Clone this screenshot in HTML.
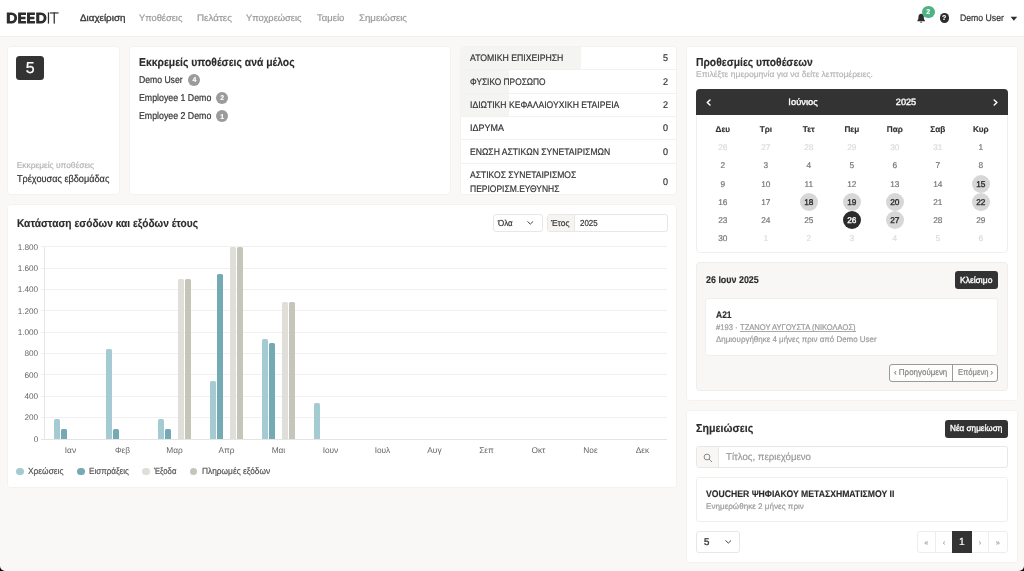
<!DOCTYPE html>
<html lang="el">
<head>
<meta charset="utf-8">
<title>DEEDIT</title>
<style>
*{box-sizing:border-box;margin:0;padding:0}
html,body{width:1024px;height:571px;overflow:hidden}
body{background:#f9f8f6;font-family:"Liberation Sans",sans-serif;color:#333;position:relative}
.abs{position:absolute}
.t{position:absolute;white-space:nowrap;line-height:1;text-rendering:geometricPrecision}
.card{position:absolute;background:#fff;border:1px solid #f3f2ef;border-radius:3.5px}
#hdr{position:absolute;left:0;top:0;width:1024px;height:36.5px;background:#fff;border-bottom:1px solid #f0efec}
.pill{position:absolute;width:12px;height:12px;border-radius:6px;background:#9b9b9b}
.sep{position:absolute;left:461px;width:215px;height:1px;background:#f2f1ee}
.pbar{position:absolute;left:461px;background:#f4f4f3}
.box{position:absolute;border:1px solid #e9e7e3;border-radius:3px;background:#fff}
.grid{position:absolute;left:40.5px;width:626.5px;height:1px;background:#ececec}
.bar{position:absolute;width:6.5px;border-radius:1.5px 1.5px 0 0}
.c1{background:#a5cbd2}.c2{background:#73aab4}.c3{background:#dfded8}.c4{background:#c6c5ba}
.dot{position:absolute;width:7.4px;height:7.4px;border-radius:50%;top:468px}
</style>
</head>
<body>
<div id="root" style="position:absolute;left:0;top:0;width:1024px;height:571px;will-change:transform">
<div id="hdr"></div>
<!-- logo -->
<svg class="abs" style="left:0;top:0" width="64" height="36" viewBox="0 0 64 36">
  <g fill="#2d2d2d" fill-rule="evenodd">
    <path d="M6.8 12.4h4.7a5.6 5.6 0 0 1 0 11.2H6.8zM9.9 15.1v5.8h1.5a2.9 2.9 0 0 0 0-5.8z"/>
    <path d="M18.1 12.4h7.9v2.6h-4.9v1.7h4.4v2.5h-4.4v1.8h5v2.6h-8z"/>
    <path d="M27 12.4h7.9v2.6h-4.9v1.7h4.4v2.5h-4.4v1.8h5v2.6h-8z"/>
    <path d="M36.2 12.4h4.7a5.6 5.6 0 0 1 0 11.2h-4.7zM39.3 15.1v5.8h1.5a2.9 2.9 0 0 0 0-5.8z"/>
    <rect x="47.85" y="12.4" width="1.25" height="11.2"/>
    <rect x="49.8" y="12.4" width="8.8" height="1.15"/>
    <rect x="53.6" y="12.4" width="1.25" height="11.2"/>
  </g>
</svg>
<!-- bell -->
<svg class="abs" style="left:915px;top:12px" width="12" height="12" viewBox="0 0 12 12">
  <path d="M6.15 1.8C4.4 1.8 3.45 3.2 3.45 4.9c0 1.9-0.3 2.7-1 3.4v0.85h7.4V8.3c-0.7-0.7-1-1.5-1-3.4 0-1.7-0.95-3.1-2.7-3.1z" fill="#2d2d2d"/>
  <path d="M5.05 9.75a1.1 1.1 0 0 0 2.2 0z" fill="#2d2d2d"/>
</svg>
<div class="abs" style="left:921.9px;top:5.5px;width:12.7px;height:12.3px;border-radius:50%;background:#4fb283"></div>
<div class="abs" style="left:939.55px;top:13.4px;width:9.2px;height:9.3px;border-radius:50%;background:#2d2d2d"></div>
<svg class="abs" style="left:1009.5px;top:16px" width="8" height="6" viewBox="0 0 8 6"><path d="M0.6 0.8h6.6L3.9 4.7z" fill="#2d2d2d"/></svg>

<!-- CARD 1 -->
<div class="card" style="left:7px;top:46px;width:113px;height:149px"></div>
<div class="abs" style="left:16px;top:55.5px;width:27.5px;height:24px;border-radius:3.5px;background:#333"></div>

<!-- CARD 2 -->
<div class="card" style="left:129px;top:46px;width:322px;height:149px"></div>
<div class="pill" style="left:188.4px;top:73.9px"></div>
<div class="pill" style="left:216.3px;top:92px"></div>
<div class="pill" style="left:216.3px;top:110.1px"></div>

<!-- CARD 3 -->
<div class="card" style="left:460px;top:46px;width:217px;height:149px"></div>
<div class="pbar" style="top:47px;width:120px;height:22px;border-radius:3px 0 0 0"></div>
<div class="pbar" style="top:70px;width:48px;height:23px"></div>
<div class="pbar" style="top:94px;width:48px;height:22px"></div>
<div class="sep" style="top:69.1px"></div>
<div class="sep" style="top:92.8px"></div>
<div class="sep" style="top:116.1px"></div>
<div class="sep" style="top:139.4px"></div>
<div class="sep" style="top:162.7px"></div>

<!-- CHART CARD -->
<div class="card" style="left:7px;top:204px;width:670px;height:284px"></div>
<div class="box" style="left:493px;top:214px;width:50px;height:18px"></div>
<svg class="abs" style="left:527.3px;top:220.8px" width="6.6" height="4.2" viewBox="0 0 8 5"><path d="M0.9 0.8L4 3.7 7.1 0.8" fill="none" stroke="#333" stroke-width="1.1" stroke-linecap="round" stroke-linejoin="round"/></svg>
<div class="box" style="left:547px;top:214px;width:121px;height:18px"></div>
<div class="abs" style="left:548px;top:215px;width:27px;height:16px;background:#f5f4f2;border-right:1px solid #e9e7e3;border-radius:2px 0 0 2px"></div>
<div class="grid" style="top:438.50px;background:#e4e4e4"></div>
<div class="grid" style="top:417.15px;background:#f0f0f0"></div>
<div class="grid" style="top:395.80px;background:#f0f0f0"></div>
<div class="grid" style="top:374.45px;background:#f0f0f0"></div>
<div class="grid" style="top:353.10px;background:#f0f0f0"></div>
<div class="grid" style="top:331.75px;background:#f0f0f0"></div>
<div class="grid" style="top:310.40px;background:#f0f0f0"></div>
<div class="grid" style="top:289.05px;background:#f0f0f0"></div>
<div class="grid" style="top:267.70px;background:#f0f0f0"></div>
<div class="grid" style="top:246.35px;background:#f0f0f0"></div>
<div class="abs" style="left:43.95px;top:246.5px;width:1px;height:193px;background:#e6e6e6"></div>
<div class="bar c1" style="left:53.75px;top:418.93px;height:20.07px"></div>
<div class="bar c2" style="left:60.65px;top:428.65px;height:10.35px"></div>
<div class="bar c1" style="left:105.75px;top:349.33px;height:89.67px"></div>
<div class="bar c2" style="left:112.65px;top:428.65px;height:10.35px"></div>
<div class="bar c1" style="left:157.75px;top:418.93px;height:20.07px"></div>
<div class="bar c2" style="left:164.65px;top:428.65px;height:10.35px"></div>
<div class="bar c3" style="left:177.85px;top:279.20px;height:159.80px"></div>
<div class="bar c4" style="left:184.75px;top:279.20px;height:159.80px"></div>
<div class="bar c1" style="left:209.75px;top:381.36px;height:57.65px"></div>
<div class="bar c2" style="left:216.65px;top:273.75px;height:165.25px"></div>
<div class="bar c3" style="left:229.85px;top:246.85px;height:192.15px"></div>
<div class="bar c4" style="left:236.75px;top:246.85px;height:192.15px"></div>
<div class="bar c1" style="left:261.75px;top:338.87px;height:100.13px"></div>
<div class="bar c2" style="left:268.65px;top:343.25px;height:95.75px"></div>
<div class="bar c3" style="left:281.85px;top:302.36px;height:136.64px"></div>
<div class="bar c4" style="left:288.75px;top:302.36px;height:136.64px"></div>
<div class="bar c1" style="left:313.75px;top:402.70px;height:36.30px"></div>
<div class="dot c1" style="left:16.2px"></div>
<div class="dot c2" style="left:77.3px"></div>
<div class="dot c3" style="left:142.4px"></div>
<div class="dot c4" style="left:189.9px"></div>
<div class="card" style="left:686px;top:46px;width:332px;height:355px"></div>
<div class="abs" style="left:695.6px;top:89.2px;width:312.4px;height:164.2px;border:1px solid #f1efec;border-radius:4px;background:#fff"></div>
<div class="abs" style="left:695.6px;top:89.2px;width:312.4px;height:25.7px;border-radius:4px 4px 0 0;background:#333"></div>
<svg class="abs" style="left:706.3px;top:98.6px" width="5.2" height="7" viewBox="0 0 6 8"><path d="M4.6 1L1.5 4l3.1 3" fill="none" stroke="#fff" stroke-width="1.7" stroke-linecap="round" stroke-linejoin="round"/></svg>
<svg class="abs" style="left:992.6px;top:98.6px" width="5.2" height="7" viewBox="0 0 6 8"><path d="M1.4 1L4.5 4 1.4 7" fill="none" stroke="#fff" stroke-width="1.7" stroke-linecap="round" stroke-linejoin="round"/></svg>
<div class="abs" style="left:971.70px;top:174.80px;width:18.2px;height:18.2px;border-radius:50%;background:#d7d7d7"></div>
<div class="abs" style="left:799.70px;top:192.90px;width:18.2px;height:18.2px;border-radius:50%;background:#d7d7d7"></div>
<div class="abs" style="left:842.70px;top:192.90px;width:18.2px;height:18.2px;border-radius:50%;background:#d7d7d7"></div>
<div class="abs" style="left:885.70px;top:192.90px;width:18.2px;height:18.2px;border-radius:50%;background:#d7d7d7"></div>
<div class="abs" style="left:971.70px;top:192.90px;width:18.2px;height:18.2px;border-radius:50%;background:#d7d7d7"></div>
<div class="abs" style="left:842.70px;top:211.00px;width:18.2px;height:18.2px;border-radius:50%;background:#2b2b2b"></div>
<div class="abs" style="left:885.70px;top:211.00px;width:18.2px;height:18.2px;border-radius:50%;background:#d7d7d7"></div>
<div class="abs" style="left:696px;top:261.5px;width:311.8px;height:129.7px;border:1px solid #efede9;border-radius:4px;background:#f8f7f5"></div>
<div class="abs" style="left:955.3px;top:271.2px;width:42.6px;height:17.7px;border-radius:3px;background:#333"></div>
<div class="abs" style="left:705.2px;top:297.8px;width:292.6px;height:57.8px;border:1px solid #f1efec;border-radius:3px;background:#fff"></div>
<div class="abs" style="left:888.9px;top:364.4px;width:109px;height:17.4px;border:1px solid #9a9a9a;border-radius:3px;background:#fdfdfc"></div>
<div class="abs" style="left:951.9px;top:364.4px;width:1px;height:17.4px;background:#9a9a9a"></div>
<div class="abs" style="left:740.4px;top:330.9px;width:115.6px;height:0.6px;background:#aaa"></div>
<div class="card" style="left:686px;top:410px;width:332px;height:153px"></div>
<div class="abs" style="left:945px;top:420.1px;width:62.7px;height:17.6px;border-radius:3px;background:#333"></div>
<div class="box" style="left:696.3px;top:446.3px;width:311.4px;height:21.4px"></div>
<div class="abs" style="left:697.3px;top:447.3px;width:21.3px;height:19.4px;background:#f8f7f5;border-right:1px solid #e9e7e3;border-radius:2px 0 0 2px"></div>
<svg class="abs" style="left:702.6px;top:452.6px" width="10" height="10" viewBox="0 0 10 10"><circle cx="4" cy="4" r="2.9" fill="none" stroke="#777" stroke-width="0.85"/><path d="M6.2 6.2L8.8 8.8" stroke="#777" stroke-width="0.85" stroke-linecap="round"/></svg>
<div class="abs" style="left:696.3px;top:477px;width:311.4px;height:45px;border:1px solid #f1efec;border-radius:3px;background:#fff"></div>
<div class="box" style="left:696.3px;top:530.7px;width:43.3px;height:22.5px"></div>
<svg class="abs" style="left:724.8px;top:540px" width="6.6" height="4.2" viewBox="0 0 8 5"><path d="M0.9 0.8L4 3.7 7.1 0.8" fill="none" stroke="#333" stroke-width="1.1" stroke-linecap="round" stroke-linejoin="round"/></svg>
<div class="box" style="left:917px;top:530.7px;width:90.7px;height:22.5px;border-color:#efedea"></div>
<div class="abs" style="left:935.2px;top:531.7px;width:1px;height:20.5px;background:#efedea"></div>
<div class="abs" style="left:988.1px;top:531.7px;width:1px;height:20.5px;background:#efedea"></div>
<div class="abs" style="left:952.2px;top:530.7px;width:19.8px;height:22.5px;background:#333"></div>
<span class="t" style="top:13px;font-size:9.4px;color:#3a3a3a;-webkit-text-stroke:0.35px;left:79.5px;transform-origin:0 50%;transform:scaleX(1.0467);">Διαχείριση</span>
<span class="t" style="top:13px;font-size:9.4px;color:#9a9a9a;-webkit-text-stroke:0.2px;left:138.9px;transform-origin:0 50%;transform:scaleX(0.9916);">Υποθέσεις</span>
<span class="t" style="top:13px;font-size:9.4px;color:#9a9a9a;-webkit-text-stroke:0.2px;left:196.8px;transform-origin:0 50%;transform:scaleX(1.0502);">Πελάτες</span>
<span class="t" style="top:13px;font-size:9.4px;color:#9a9a9a;-webkit-text-stroke:0.2px;left:246.3px;transform-origin:0 50%;transform:scaleX(0.9951);">Υποχρεώσεις</span>
<span class="t" style="top:13px;font-size:9.4px;color:#9a9a9a;-webkit-text-stroke:0.2px;left:316.9px;transform-origin:0 50%;transform:scaleX(1.0148);">Ταμείο</span>
<span class="t" style="top:13px;font-size:9.4px;color:#9a9a9a;-webkit-text-stroke:0.2px;left:358.5px;transform-origin:0 50%;transform:scaleX(1.0309);">Σημειώσεις</span>
<span class="t" style="top:14px;font-size:9.5px;color:#333;-webkit-text-stroke:0.2px;left:960.1px;transform-origin:0 50%;transform:scaleX(0.9137);">Demo User</span>
<span class="t" style="top:9px;font-size:7.1px;color:#fff;font-weight:bold;-webkit-text-stroke:0.15px;left:928.25px;transform-origin:50% 50%;transform:translateX(-50%) scaleX(1.0000);">2</span>
<span class="t" style="top:15px;font-size:7.0px;color:#fff;font-weight:bold;-webkit-text-stroke:0.15px;left:944.15px;transform-origin:50% 50%;transform:translateX(-50%) scaleX(1.0000);">?</span>
<span class="t" style="top:61px;font-size:16px;color:#fff;-webkit-text-stroke:0.2px;left:30.2px;transform-origin:50% 50%;transform:translateX(-50%) scaleX(1.0000);">5</span>
<span class="t" style="top:161px;font-size:8.4px;color:#b5b5b5;-webkit-text-stroke:0.2px;left:16.7px;">Εκκρεμείς υποθέσεις</span>
<span class="t" style="top:175px;font-size:9.9px;color:#333;-webkit-text-stroke:0.2px;left:17.3px;transform-origin:0 50%;transform:scaleX(0.9266);">Τρέχουσας εβδομάδας</span>
<span class="t" style="top:58px;font-size:11.5px;color:#2b2b2b;font-weight:bold;-webkit-text-stroke:0.15px;left:139.1px;transform-origin:0 50%;transform:scaleX(0.9023);">Εκκρεμείς υποθέσεις ανά μέλος</span>
<span class="t" style="top:76px;font-size:9.9px;color:#333;-webkit-text-stroke:0.2px;left:139.1px;transform-origin:0 50%;transform:scaleX(0.8731);">Demo User</span>
<span class="t" style="top:94px;font-size:9.9px;color:#333;-webkit-text-stroke:0.2px;left:139.1px;transform-origin:0 50%;transform:scaleX(0.8900);">Employee 1 Demo</span>
<span class="t" style="top:112px;font-size:9.9px;color:#333;-webkit-text-stroke:0.2px;left:139.1px;transform-origin:0 50%;transform:scaleX(0.8900);">Employee 2 Demo</span>
<span class="t" style="top:77px;font-size:7px;color:#fff;font-weight:bold;-webkit-text-stroke:0.15px;left:194.4px;transform-origin:50% 50%;transform:translateX(-50%) scaleX(1.0000);">4</span>
<span class="t" style="top:95px;font-size:7px;color:#fff;font-weight:bold;-webkit-text-stroke:0.15px;left:222.3px;transform-origin:50% 50%;transform:translateX(-50%) scaleX(1.0000);">2</span>
<span class="t" style="top:114px;font-size:7px;color:#fff;font-weight:bold;-webkit-text-stroke:0.15px;left:222.3px;transform-origin:50% 50%;transform:translateX(-50%) scaleX(1.0000);">1</span>
<span class="t" style="top:54px;font-size:9.5px;color:#333;-webkit-text-stroke:0.2px;left:469.7px;transform-origin:0 50%;transform:scaleX(0.9146);">ΑΤΟΜΙΚΗ ΕΠΙΧΕΙΡΗΣΗ</span>
<span class="t" style="top:78px;font-size:9.5px;color:#333;-webkit-text-stroke:0.2px;left:469.7px;transform-origin:0 50%;transform:scaleX(0.8789);">ΦΥΣΙΚΟ ΠΡΟΣΩΠΟ</span>
<span class="t" style="top:101px;font-size:9.5px;color:#333;-webkit-text-stroke:0.2px;left:469.7px;transform-origin:0 50%;transform:scaleX(0.9052);">ΙΔΙΩΤΙΚΗ ΚΕΦΑΛΑΙΟΥΧΙΚΗ ΕΤΑΙΡΕΙΑ</span>
<span class="t" style="top:124px;font-size:9.5px;color:#333;-webkit-text-stroke:0.2px;left:469.7px;transform-origin:0 50%;transform:scaleX(0.9437);">ΙΔΡΥΜΑ</span>
<span class="t" style="top:148px;font-size:9.5px;color:#333;-webkit-text-stroke:0.2px;left:469.7px;transform-origin:0 50%;transform:scaleX(0.9048);">ΕΝΩΣΗ ΑΣΤΙΚΩΝ ΣΥΝΕΤΑΙΡΙΣΜΩΝ</span>
<span class="t" style="top:171px;font-size:9.5px;color:#333;-webkit-text-stroke:0.2px;left:469.7px;transform-origin:0 50%;transform:scaleX(0.9000);">ΑΣΤΙΚΟΣ ΣΥΝΕΤΑΙΡΙΣΜΟΣ</span>
<span class="t" style="top:185px;font-size:9.5px;color:#333;-webkit-text-stroke:0.2px;left:469.7px;transform-origin:0 50%;transform:scaleX(0.8939);">ΠΕΡΙΟΡΙΣΜ.ΕΥΘΥΝΗΣ</span>
<span class="t" style="top:54px;font-size:9.7px;color:#333;-webkit-text-stroke:0.2px;left:667.8px;transform-origin:100% 50%;transform:translateX(-100%) scaleX(0.9275);">5</span>
<span class="t" style="top:78px;font-size:9.7px;color:#333;-webkit-text-stroke:0.2px;left:667.8px;transform-origin:100% 50%;transform:translateX(-100%) scaleX(0.9275);">2</span>
<span class="t" style="top:101px;font-size:9.7px;color:#333;-webkit-text-stroke:0.2px;left:667.8px;transform-origin:100% 50%;transform:translateX(-100%) scaleX(0.9275);">2</span>
<span class="t" style="top:124px;font-size:9.7px;color:#333;-webkit-text-stroke:0.2px;left:667.8px;transform-origin:100% 50%;transform:translateX(-100%) scaleX(0.9275);">0</span>
<span class="t" style="top:148px;font-size:9.7px;color:#333;-webkit-text-stroke:0.2px;left:667.8px;transform-origin:100% 50%;transform:translateX(-100%) scaleX(0.9275);">0</span>
<span class="t" style="top:178px;font-size:9.7px;color:#333;-webkit-text-stroke:0.2px;left:667.8px;transform-origin:100% 50%;transform:translateX(-100%) scaleX(0.9275);">0</span>
<span class="t" style="top:219px;font-size:11.4px;color:#2b2b2b;font-weight:bold;-webkit-text-stroke:0.15px;left:17.1px;transform-origin:0 50%;transform:scaleX(0.8940);">Κατάσταση εσόδων και εξόδων έτους</span>
<span class="t" style="top:219px;font-size:8.7px;color:#333;-webkit-text-stroke:0.2px;left:498.0px;transform-origin:0 50%;transform:scaleX(0.9143);">Όλα</span>
<span class="t" style="top:219px;font-size:8.7px;color:#333;-webkit-text-stroke:0.2px;left:551.3px;transform-origin:0 50%;transform:scaleX(0.9665);">Έτος</span>
<span class="t" style="top:219px;font-size:8.7px;color:#333;-webkit-text-stroke:0.2px;left:579.6px;transform-origin:0 50%;transform:scaleX(0.9106);">2025</span>
<span class="t" style="top:436px;font-size:8.2px;color:#666;left:38.2px;transform-origin:100% 50%;transform:translateX(-100%) scaleX(1.0000);">0</span>
<span class="t" style="top:414px;font-size:8.2px;color:#666;left:38.2px;transform-origin:100% 50%;transform:translateX(-100%) scaleX(1.0000);">200</span>
<span class="t" style="top:393px;font-size:8.2px;color:#666;left:38.2px;transform-origin:100% 50%;transform:translateX(-100%) scaleX(1.0000);">400</span>
<span class="t" style="top:372px;font-size:8.2px;color:#666;left:38.2px;transform-origin:100% 50%;transform:translateX(-100%) scaleX(1.0000);">600</span>
<span class="t" style="top:350px;font-size:8.2px;color:#666;left:38.2px;transform-origin:100% 50%;transform:translateX(-100%) scaleX(1.0000);">800</span>
<span class="t" style="top:329px;font-size:8.2px;color:#666;left:38.2px;transform-origin:100% 50%;transform:translateX(-100%) scaleX(1.0000);">1.000</span>
<span class="t" style="top:308px;font-size:8.2px;color:#666;left:38.2px;transform-origin:100% 50%;transform:translateX(-100%) scaleX(1.0000);">1.200</span>
<span class="t" style="top:286px;font-size:8.2px;color:#666;left:38.2px;transform-origin:100% 50%;transform:translateX(-100%) scaleX(1.0000);">1.400</span>
<span class="t" style="top:265px;font-size:8.2px;color:#666;left:38.2px;transform-origin:100% 50%;transform:translateX(-100%) scaleX(1.0000);">1.600</span>
<span class="t" style="top:244px;font-size:8.2px;color:#666;left:38.2px;transform-origin:100% 50%;transform:translateX(-100%) scaleX(1.0000);">1.800</span>
<span class="t" style="top:446px;font-size:8.3px;color:#666;left:70.45px;transform-origin:50% 50%;transform:translateX(-50%) scaleX(1.0000);">Ιαν</span>
<span class="t" style="top:446px;font-size:8.3px;color:#666;left:122.45px;transform-origin:50% 50%;transform:translateX(-50%) scaleX(1.0000);">Φεβ</span>
<span class="t" style="top:446px;font-size:8.3px;color:#666;left:174.45px;transform-origin:50% 50%;transform:translateX(-50%) scaleX(1.0000);">Μαρ</span>
<span class="t" style="top:446px;font-size:8.3px;color:#666;left:226.45px;transform-origin:50% 50%;transform:translateX(-50%) scaleX(1.0000);">Απρ</span>
<span class="t" style="top:446px;font-size:8.3px;color:#666;left:278.45px;transform-origin:50% 50%;transform:translateX(-50%) scaleX(1.0000);">Μαι</span>
<span class="t" style="top:446px;font-size:8.3px;color:#666;left:330.45px;transform-origin:50% 50%;transform:translateX(-50%) scaleX(1.0000);">Ιουν</span>
<span class="t" style="top:446px;font-size:8.3px;color:#666;left:382.45px;transform-origin:50% 50%;transform:translateX(-50%) scaleX(1.0000);">Ιουλ</span>
<span class="t" style="top:446px;font-size:8.3px;color:#666;left:434.45px;transform-origin:50% 50%;transform:translateX(-50%) scaleX(1.0000);">Αυγ</span>
<span class="t" style="top:446px;font-size:8.3px;color:#666;left:486.45px;transform-origin:50% 50%;transform:translateX(-50%) scaleX(1.0000);">Σεπ</span>
<span class="t" style="top:446px;font-size:8.3px;color:#666;left:538.45px;transform-origin:50% 50%;transform:translateX(-50%) scaleX(1.0000);">Οκτ</span>
<span class="t" style="top:446px;font-size:8.3px;color:#666;left:590.45px;transform-origin:50% 50%;transform:translateX(-50%) scaleX(1.0000);">Νοε</span>
<span class="t" style="top:446px;font-size:8.3px;color:#666;left:642.45px;transform-origin:50% 50%;transform:translateX(-50%) scaleX(1.0000);">Δεκ</span>
<span class="t" style="top:467px;font-size:9.1px;color:#555;-webkit-text-stroke:0.2px;left:28.0px;transform-origin:0 50%;transform:scaleX(0.9228);">Χρεώσεις</span>
<span class="t" style="top:467px;font-size:9.1px;color:#555;-webkit-text-stroke:0.2px;left:89.0px;transform-origin:0 50%;transform:scaleX(0.8879);">Εισπράξεις</span>
<span class="t" style="top:467px;font-size:9.1px;color:#555;-webkit-text-stroke:0.2px;left:154.0px;transform-origin:0 50%;transform:scaleX(0.8503);">Έξοδα</span>
<span class="t" style="top:467px;font-size:9.1px;color:#555;-webkit-text-stroke:0.2px;left:201.7px;transform-origin:0 50%;transform:scaleX(0.9179);">Πληρωμές εξόδων</span>
<span class="t" style="top:58px;font-size:11.5px;color:#2b2b2b;font-weight:bold;-webkit-text-stroke:0.15px;left:696.2px;transform-origin:0 50%;transform:scaleX(0.8991);">Προθεσμίες υποθέσεων</span>
<span class="t" style="top:70px;font-size:8.4px;color:#b5b5b5;-webkit-text-stroke:0.2px;left:696.2px;transform-origin:0 50%;transform:scaleX(1.0145);">Επιλέξτε ημερομηνία για να δείτε λεπτομέρειες.</span>
<span class="t" style="top:98px;font-size:9.1px;color:#fff;-webkit-text-stroke:0.35px;left:802.6px;transform-origin:50% 50%;transform:translateX(-50%) scaleX(1.0253);">Ιούνιος</span>
<span class="t" style="top:98px;font-size:9.1px;color:#fff;-webkit-text-stroke:0.35px;left:906.0px;transform-origin:50% 50%;transform:translateX(-50%) scaleX(1.0082);">2025</span>
<span class="t" style="top:126px;font-size:8.2px;color:#333;font-weight:bold;-webkit-text-stroke:0.15px;left:722.8px;transform-origin:50% 50%;transform:translateX(-50%) scaleX(1.0000);">Δευ</span>
<span class="t" style="top:126px;font-size:8.2px;color:#333;font-weight:bold;-webkit-text-stroke:0.15px;left:765.8px;transform-origin:50% 50%;transform:translateX(-50%) scaleX(1.0000);">Τρι</span>
<span class="t" style="top:126px;font-size:8.2px;color:#333;font-weight:bold;-webkit-text-stroke:0.15px;left:808.8px;transform-origin:50% 50%;transform:translateX(-50%) scaleX(1.0000);">Τετ</span>
<span class="t" style="top:126px;font-size:8.2px;color:#333;font-weight:bold;-webkit-text-stroke:0.15px;left:851.8px;transform-origin:50% 50%;transform:translateX(-50%) scaleX(1.0000);">Πεμ</span>
<span class="t" style="top:126px;font-size:8.2px;color:#333;font-weight:bold;-webkit-text-stroke:0.15px;left:894.8px;transform-origin:50% 50%;transform:translateX(-50%) scaleX(1.0000);">Παρ</span>
<span class="t" style="top:126px;font-size:8.2px;color:#333;font-weight:bold;-webkit-text-stroke:0.15px;left:937.8px;transform-origin:50% 50%;transform:translateX(-50%) scaleX(1.0000);">Σαβ</span>
<span class="t" style="top:126px;font-size:8.2px;color:#333;font-weight:bold;-webkit-text-stroke:0.15px;left:980.8px;transform-origin:50% 50%;transform:translateX(-50%) scaleX(1.0000);">Κυρ</span>
<span class="t" style="top:143px;font-size:8.3px;color:#dcdcdc;-webkit-text-stroke:0.2px;left:722.8px;transform-origin:50% 50%;transform:translateX(-50%) scaleX(1.0000);">26</span>
<span class="t" style="top:143px;font-size:8.3px;color:#dcdcdc;-webkit-text-stroke:0.2px;left:765.8px;transform-origin:50% 50%;transform:translateX(-50%) scaleX(1.0000);">27</span>
<span class="t" style="top:143px;font-size:8.3px;color:#dcdcdc;-webkit-text-stroke:0.2px;left:808.8px;transform-origin:50% 50%;transform:translateX(-50%) scaleX(1.0000);">28</span>
<span class="t" style="top:143px;font-size:8.3px;color:#dcdcdc;-webkit-text-stroke:0.2px;left:851.8px;transform-origin:50% 50%;transform:translateX(-50%) scaleX(1.0000);">29</span>
<span class="t" style="top:143px;font-size:8.3px;color:#dcdcdc;-webkit-text-stroke:0.2px;left:894.8px;transform-origin:50% 50%;transform:translateX(-50%) scaleX(1.0000);">30</span>
<span class="t" style="top:143px;font-size:8.3px;color:#dcdcdc;-webkit-text-stroke:0.2px;left:937.8px;transform-origin:50% 50%;transform:translateX(-50%) scaleX(1.0000);">31</span>
<span class="t" style="top:143px;font-size:8.3px;color:#777;-webkit-text-stroke:0.2px;left:980.8px;transform-origin:50% 50%;transform:translateX(-50%) scaleX(1.0000);">1</span>
<span class="t" style="top:161px;font-size:8.3px;color:#777;-webkit-text-stroke:0.2px;left:722.8px;transform-origin:50% 50%;transform:translateX(-50%) scaleX(1.0000);">2</span>
<span class="t" style="top:161px;font-size:8.3px;color:#777;-webkit-text-stroke:0.2px;left:765.8px;transform-origin:50% 50%;transform:translateX(-50%) scaleX(1.0000);">3</span>
<span class="t" style="top:161px;font-size:8.3px;color:#777;-webkit-text-stroke:0.2px;left:808.8px;transform-origin:50% 50%;transform:translateX(-50%) scaleX(1.0000);">4</span>
<span class="t" style="top:161px;font-size:8.3px;color:#777;-webkit-text-stroke:0.2px;left:851.8px;transform-origin:50% 50%;transform:translateX(-50%) scaleX(1.0000);">5</span>
<span class="t" style="top:161px;font-size:8.3px;color:#777;-webkit-text-stroke:0.2px;left:894.8px;transform-origin:50% 50%;transform:translateX(-50%) scaleX(1.0000);">6</span>
<span class="t" style="top:161px;font-size:8.3px;color:#777;-webkit-text-stroke:0.2px;left:937.8px;transform-origin:50% 50%;transform:translateX(-50%) scaleX(1.0000);">7</span>
<span class="t" style="top:161px;font-size:8.3px;color:#777;-webkit-text-stroke:0.2px;left:980.8px;transform-origin:50% 50%;transform:translateX(-50%) scaleX(1.0000);">8</span>
<span class="t" style="top:180px;font-size:8.3px;color:#777;-webkit-text-stroke:0.2px;left:722.8px;transform-origin:50% 50%;transform:translateX(-50%) scaleX(1.0000);">9</span>
<span class="t" style="top:180px;font-size:8.3px;color:#777;-webkit-text-stroke:0.2px;left:765.8px;transform-origin:50% 50%;transform:translateX(-50%) scaleX(1.0000);">10</span>
<span class="t" style="top:180px;font-size:8.3px;color:#777;-webkit-text-stroke:0.2px;left:808.8px;transform-origin:50% 50%;transform:translateX(-50%) scaleX(1.0000);">11</span>
<span class="t" style="top:180px;font-size:8.3px;color:#777;-webkit-text-stroke:0.2px;left:851.8px;transform-origin:50% 50%;transform:translateX(-50%) scaleX(1.0000);">12</span>
<span class="t" style="top:180px;font-size:8.3px;color:#777;-webkit-text-stroke:0.2px;left:894.8px;transform-origin:50% 50%;transform:translateX(-50%) scaleX(1.0000);">13</span>
<span class="t" style="top:180px;font-size:8.3px;color:#777;-webkit-text-stroke:0.2px;left:937.8px;transform-origin:50% 50%;transform:translateX(-50%) scaleX(1.0000);">14</span>
<span class="t" style="top:180px;font-size:8.3px;color:#2b2b2b;-webkit-text-stroke:0.35px;left:980.8px;transform-origin:50% 50%;transform:translateX(-50%) scaleX(1.0000);">15</span>
<span class="t" style="top:198px;font-size:8.3px;color:#777;-webkit-text-stroke:0.2px;left:722.8px;transform-origin:50% 50%;transform:translateX(-50%) scaleX(1.0000);">16</span>
<span class="t" style="top:198px;font-size:8.3px;color:#777;-webkit-text-stroke:0.2px;left:765.8px;transform-origin:50% 50%;transform:translateX(-50%) scaleX(1.0000);">17</span>
<span class="t" style="top:198px;font-size:8.3px;color:#2b2b2b;-webkit-text-stroke:0.35px;left:808.8px;transform-origin:50% 50%;transform:translateX(-50%) scaleX(1.0000);">18</span>
<span class="t" style="top:198px;font-size:8.3px;color:#2b2b2b;-webkit-text-stroke:0.35px;left:851.8px;transform-origin:50% 50%;transform:translateX(-50%) scaleX(1.0000);">19</span>
<span class="t" style="top:198px;font-size:8.3px;color:#2b2b2b;-webkit-text-stroke:0.35px;left:894.8px;transform-origin:50% 50%;transform:translateX(-50%) scaleX(1.0000);">20</span>
<span class="t" style="top:198px;font-size:8.3px;color:#777;-webkit-text-stroke:0.2px;left:937.8px;transform-origin:50% 50%;transform:translateX(-50%) scaleX(1.0000);">21</span>
<span class="t" style="top:198px;font-size:8.3px;color:#2b2b2b;-webkit-text-stroke:0.35px;left:980.8px;transform-origin:50% 50%;transform:translateX(-50%) scaleX(1.0000);">22</span>
<span class="t" style="top:216px;font-size:8.3px;color:#777;-webkit-text-stroke:0.2px;left:722.8px;transform-origin:50% 50%;transform:translateX(-50%) scaleX(1.0000);">23</span>
<span class="t" style="top:216px;font-size:8.3px;color:#777;-webkit-text-stroke:0.2px;left:765.8px;transform-origin:50% 50%;transform:translateX(-50%) scaleX(1.0000);">24</span>
<span class="t" style="top:216px;font-size:8.3px;color:#777;-webkit-text-stroke:0.2px;left:808.8px;transform-origin:50% 50%;transform:translateX(-50%) scaleX(1.0000);">25</span>
<span class="t" style="top:216px;font-size:8.3px;color:#fff;-webkit-text-stroke:0.35px;left:851.8px;transform-origin:50% 50%;transform:translateX(-50%) scaleX(1.0000);">26</span>
<span class="t" style="top:216px;font-size:8.3px;color:#2b2b2b;-webkit-text-stroke:0.35px;left:894.8px;transform-origin:50% 50%;transform:translateX(-50%) scaleX(1.0000);">27</span>
<span class="t" style="top:216px;font-size:8.3px;color:#777;-webkit-text-stroke:0.2px;left:937.8px;transform-origin:50% 50%;transform:translateX(-50%) scaleX(1.0000);">28</span>
<span class="t" style="top:216px;font-size:8.3px;color:#777;-webkit-text-stroke:0.2px;left:980.8px;transform-origin:50% 50%;transform:translateX(-50%) scaleX(1.0000);">29</span>
<span class="t" style="top:234px;font-size:8.3px;color:#777;-webkit-text-stroke:0.2px;left:722.8px;transform-origin:50% 50%;transform:translateX(-50%) scaleX(1.0000);">30</span>
<span class="t" style="top:234px;font-size:8.3px;color:#dcdcdc;-webkit-text-stroke:0.2px;left:765.8px;transform-origin:50% 50%;transform:translateX(-50%) scaleX(1.0000);">1</span>
<span class="t" style="top:234px;font-size:8.3px;color:#dcdcdc;-webkit-text-stroke:0.2px;left:808.8px;transform-origin:50% 50%;transform:translateX(-50%) scaleX(1.0000);">2</span>
<span class="t" style="top:234px;font-size:8.3px;color:#dcdcdc;-webkit-text-stroke:0.2px;left:851.8px;transform-origin:50% 50%;transform:translateX(-50%) scaleX(1.0000);">3</span>
<span class="t" style="top:234px;font-size:8.3px;color:#dcdcdc;-webkit-text-stroke:0.2px;left:894.8px;transform-origin:50% 50%;transform:translateX(-50%) scaleX(1.0000);">4</span>
<span class="t" style="top:234px;font-size:8.3px;color:#dcdcdc;-webkit-text-stroke:0.2px;left:937.8px;transform-origin:50% 50%;transform:translateX(-50%) scaleX(1.0000);">5</span>
<span class="t" style="top:234px;font-size:8.3px;color:#dcdcdc;-webkit-text-stroke:0.2px;left:980.8px;transform-origin:50% 50%;transform:translateX(-50%) scaleX(1.0000);">6</span>
<span class="t" style="top:276px;font-size:9.8px;color:#2b2b2b;font-weight:bold;-webkit-text-stroke:0.15px;left:706.0px;transform-origin:0 50%;transform:scaleX(0.9095);">26 Ιουν 2025</span>
<span class="t" style="top:276px;font-size:8.7px;color:#fff;-webkit-text-stroke:0.35px;left:960.3px;transform-origin:0 50%;transform:scaleX(0.9795);">Κλείσιμο</span>
<span class="t" style="top:311px;font-size:9.6px;color:#2b2b2b;font-weight:bold;-webkit-text-stroke:0.15px;left:715.8px;transform-origin:0 50%;transform:scaleX(0.8859);">A21</span>
<span class="t" style="top:324px;font-size:8.2px;color:#9a9a9a;-webkit-text-stroke:0.2px;left:715.8px;transform-origin:0 50%;transform:scaleX(0.9303);">#193 ·</span>
<span class="t" style="top:324px;font-size:8.2px;color:#9a9a9a;-webkit-text-stroke:0.2px;left:740.4px;transform-origin:0 50%;transform:scaleX(0.9248);">ΤΖΑΝΟΥ ΑΥΓΟΥΣΤΑ (ΝΙΚΟΛΑΟΣ)</span>
<span class="t" style="top:336px;font-size:8.2px;color:#9a9a9a;-webkit-text-stroke:0.2px;left:715.8px;transform-origin:0 50%;transform:scaleX(0.9727);">Δημιουργήθηκε 4 μήνες πριν από Demo User</span>
<span class="t" style="top:368px;font-size:8.7px;color:#858585;-webkit-text-stroke:0.2px;left:894.1px;transform-origin:0 50%;transform:scaleX(0.9163);">‹ Προηγούμενη</span>
<span class="t" style="top:368px;font-size:8.7px;color:#858585;-webkit-text-stroke:0.2px;left:957.6px;transform-origin:0 50%;transform:scaleX(0.8778);">Επόμενη ›</span>
<span class="t" style="top:424px;font-size:11.5px;color:#2b2b2b;font-weight:bold;-webkit-text-stroke:0.15px;left:695.6px;transform-origin:0 50%;transform:scaleX(0.9249);">Σημειώσεις</span>
<span class="t" style="top:424px;font-size:8.7px;color:#fff;-webkit-text-stroke:0.35px;left:950.2px;transform-origin:0 50%;transform:scaleX(0.9413);">Νέα σημείωση</span>
<span class="t" style="top:453px;font-size:9.9px;color:#9a9a9a;-webkit-text-stroke:0.2px;left:726.1px;transform-origin:0 50%;transform:scaleX(0.9757);">Τίτλος, περιεχόμενο</span>
<span class="t" style="top:490px;font-size:9.5px;color:#2b2b2b;font-weight:bold;-webkit-text-stroke:0.15px;left:705.9px;transform-origin:0 50%;transform:scaleX(0.9099);">VOUCHER ΨΗΦΙΑΚΟΥ ΜΕΤΑΣΧΗΜΑΤΙΣΜΟΥ ΙΙ</span>
<span class="t" style="top:503px;font-size:8.2px;color:#9a9a9a;-webkit-text-stroke:0.2px;left:705.8px;transform-origin:0 50%;transform:scaleX(0.9895);">Ενημερώθηκε 2 μήνες πριν</span>
<span class="t" style="top:538px;font-size:9.7px;color:#333;-webkit-text-stroke:0.35px;left:704.0px;">5</span>
<span class="t" style="top:538px;font-size:10.3px;color:#fff;-webkit-text-stroke:0.2px;left:961.9px;transform-origin:50% 50%;transform:translateX(-50%) scaleX(1.0000);">1</span>
<span class="t" style="top:539px;font-size:7.5px;color:#aaa;-webkit-text-stroke:0.2px;left:926.4px;transform-origin:50% 50%;transform:translateX(-50%) scaleX(1.0000);">«</span>
<span class="t" style="top:539px;font-size:7.5px;color:#aaa;-webkit-text-stroke:0.2px;left:944.1px;transform-origin:50% 50%;transform:translateX(-50%) scaleX(1.0000);">‹</span>
<span class="t" style="top:539px;font-size:7.5px;color:#aaa;-webkit-text-stroke:0.2px;left:980.1px;transform-origin:50% 50%;transform:translateX(-50%) scaleX(1.0000);">›</span>
<span class="t" style="top:539px;font-size:7.5px;color:#aaa;-webkit-text-stroke:0.2px;left:997.9px;transform-origin:50% 50%;transform:translateX(-50%) scaleX(1.0000);">»</span>
<!-- window corners -->
<svg class="abs" style="left:0;top:566px" width="5" height="5" viewBox="0 0 5 5"><path d="M0 0v5h5A5 5 0 0 1 0 0z" fill="#000"/></svg>
<svg class="abs" style="left:1019px;top:566px" width="5" height="5" viewBox="0 0 5 5"><path d="M5 0v5H0A5 5 0 0 0 5 0z" fill="#000"/></svg>
</div>
</body>
</html>
